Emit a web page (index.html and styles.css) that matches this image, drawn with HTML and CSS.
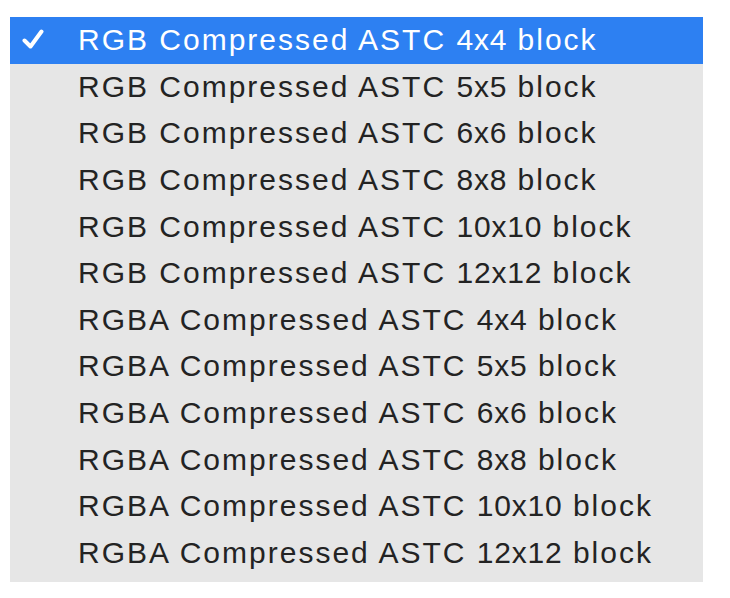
FILE: index.html
```html
<!DOCTYPE html>
<html>
<head>
<meta charset="utf-8">
<link rel="stylesheet" href="styles.css">
</head>
<body>
<div class="menu">
  <div class="item selected">
    <span class="check"><svg width="22" height="20" viewBox="0 0 22 20"><path d="M2.5 11.5 L8.5 17.5 L19.5 2.5" fill="none" stroke="#fff" stroke-width="4" stroke-linecap="round" stroke-linejoin="round"/></svg></span>
    <span class="label">RGB Compressed ASTC <span class="dim">4x4</span> block</span>
  </div>
  <div class="item"><span class="check"></span><span class="label">RGB Compressed ASTC <span class="dim">5x5</span> block</span></div>
  <div class="item"><span class="check"></span><span class="label">RGB Compressed ASTC <span class="dim">6x6</span> block</span></div>
  <div class="item"><span class="check"></span><span class="label">RGB Compressed ASTC <span class="dim">8x8</span> block</span></div>
  <div class="item"><span class="check"></span><span class="label">RGB Compressed ASTC <span class="dim">10x10</span> block</span></div>
  <div class="item"><span class="check"></span><span class="label">RGB Compressed ASTC <span class="dim">12x12</span> block</span></div>
  <div class="item"><span class="check"></span><span class="label">RGBA Compressed ASTC <span class="dim">4x4</span> block</span></div>
  <div class="item"><span class="check"></span><span class="label">RGBA Compressed ASTC <span class="dim">5x5</span> block</span></div>
  <div class="item"><span class="check"></span><span class="label">RGBA Compressed ASTC <span class="dim">6x6</span> block</span></div>
  <div class="item"><span class="check"></span><span class="label">RGBA Compressed ASTC <span class="dim">8x8</span> block</span></div>
  <div class="item"><span class="check"></span><span class="label">RGBA Compressed ASTC <span class="dim">10x10</span> block</span></div>
  <div class="item"><span class="check"></span><span class="label">RGBA Compressed ASTC <span class="dim">12x12</span> block</span></div>
</div>
</body>
</html>
```
FILE: styles.css
```css
html, body {
  margin: 0;
  padding: 0;
  background: #ffffff;
}
body {
  padding: 17px 0 0 10px;
  font-family: "Liberation Sans", Arial, sans-serif;
}
.menu {
  width: 693px;
  background: #e6e6e6;
  padding-bottom: 6px;
  display: flex;
  flex-direction: column;
}
.item {
  height: 46.6px;
  display: flex;
  align-items: center;
  color: #232323;
  font-size: 30px;
  letter-spacing: 2px;
}
.item.selected {
  background: #2d80f2;
  color: #ffffff;
}
.check {
  width: 68px;
  display: flex;
  justify-content: flex-start;
  padding-left: 12px;
  box-sizing: border-box;
  align-items: center;
}
.check svg {
  display: block;
  margin-top: -2px;
}
.label {
  white-space: nowrap;
}
.dim {
  letter-spacing: 0.8px;
}
```
